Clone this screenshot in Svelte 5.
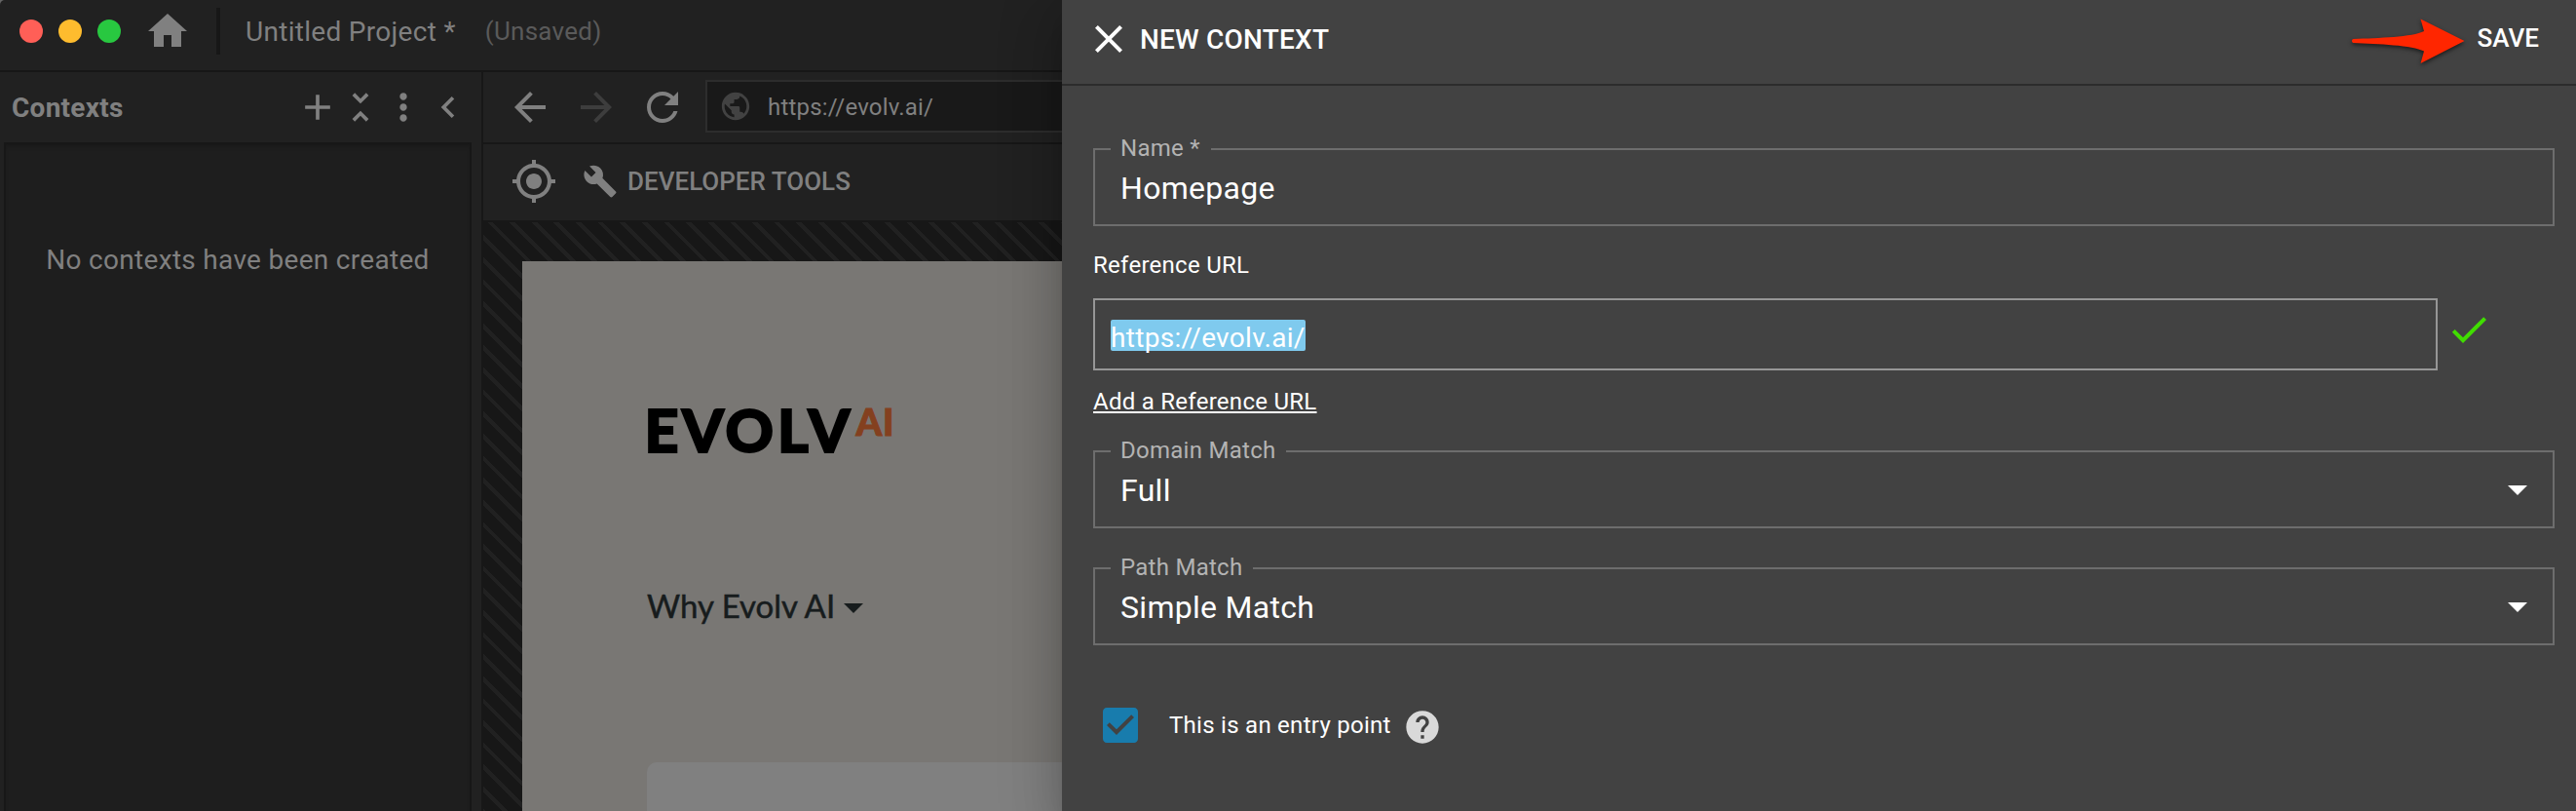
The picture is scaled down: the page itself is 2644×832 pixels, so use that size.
<script>
	const icons = {
		home: 'M10 20v-6h4v6h5v-8h3L12 3 2 12h3v8z',
		add: 'M19 13h-6v6h-2v-6H5v-2h6V5h2v6h6v2z',
		collapse: 'M7.41 18.59L8.83 20 12 16.83 15.17 20l1.41-1.41L12 14l-4.59 4.59zm9.18-13.18L15.17 4 12 7.17 8.83 4 7.41 5.41 12 10l4.59-4.59z',
		more: 'M12 8c1.1 0 2-.9 2-2s-.9-2-2-2-2 .9-2 2 .9 2 2 2zm0 2c-1.1 0-2 .9-2 2s.9 2 2 2 2-.9 2-2-.9-2-2-2zm0 6c-1.1 0-2 .9-2 2s.9 2 2 2 2-.9 2-2-.9-2-2-2z',
		left: 'M15.41 7.41L14 6l-6 6 6 6 1.41-1.41L10.83 12z',
		back: 'M20 11H7.83l5.59-5.59L12 4l-8 8 8 8 1.41-1.41L7.83 13H20v-2z',
		forward: 'M12 4l-1.41 1.41L16.17 11H4v2h12.17l-5.58 5.59L12 20l8-8z',
		refresh: 'M17.65 6.35C16.2 4.9 14.21 4 12 4c-4.42 0-7.99 3.58-7.99 8s3.57 8 7.99 8c3.73 0 6.84-2.55 7.73-6h-2.08c-.82 2.33-3.04 4-5.65 4-3.31 0-6-2.69-6-6s2.69-6 6-6c1.66 0 3.14.69 4.22 1.78L13 11h7V4l-2.35 2.35z',
		globe: 'M12 2C6.48 2 2 6.48 2 12s4.48 10 10 10 10-4.48 10-10S17.52 2 12 2zm-1 17.93c-3.95-.49-7-3.85-7-7.93 0-.62.08-1.21.21-1.79L9 15v1c0 1.1.9 2 2 2v1.93zm6.9-2.54c-.26-.81-1-1.39-1.9-1.39h-1v-3c0-.55-.45-1-1-1H8v-2h2c.55 0 1-.45 1-1V7h2c1.1 0 2-.9 2-2v-.41c2.93 1.19 5 4.06 5 7.41 0 2.08-.8 3.97-2.1 5.39z',
		target: 'M12 8c-2.21 0-4 1.79-4 4s1.79 4 4 4 4-1.79 4-4-1.79-4-4-4zm8.94 3c-.46-4.17-3.77-7.48-7.94-7.94V1h-2v2.06C6.83 3.52 3.52 6.83 3.06 11H1v2h2.06c.46 4.17 3.77 7.48 7.94 7.94V23h2v-2.06c4.17-.46 7.48-3.77 7.94-7.94H23v-2h-2.06zM12 19c-3.87 0-7-3.13-7-7s3.13-7 7-7 7 3.13 7 7-3.13 7-7 7z',
		wrench: 'M22.7 19l-9.1-9.1c.9-2.3.4-5-1.5-6.9-2-2-5-2.4-7.4-1.3L9 6 6 9 1.6 4.7C.4 7.1.9 10.1 2.9 12.1c1.9 1.9 4.6 2.4 6.9 1.5l9.1 9.1c.4.4 1 .4 1.4 0l2.3-2.3c.5-.4.5-1.1.1-1.4z',
		close: 'M19 6.41L17.59 5 12 10.59 6.41 5 5 6.41 10.59 12 5 17.59 6.41 19 12 13.41 17.59 19 19 17.59 13.41 12z',
		check: 'M9 16.17L4.83 12l-1.42 1.41L9 19 21 7l-1.41-1.41z',
		caret: 'M7 10l5 5 5-5z',
		checkbox: 'M19 3H5c-1.11 0-2 .9-2 2v14c0 1.1.89 2 2 2h14c1.11 0 2-.9 2-2V5c0-1.1-.89-2-2-2zm-9 14l-5-5 1.41-1.41L10 14.17l7.59-7.59L19 8l-9 9z',
		help: 'M12 2C6.48 2 2 6.48 2 12s4.48 10 10 10 10-4.48 10-10S17.52 2 12 2zm1 17h-2v-2h2v2zm2.07-7.75l-.9.92C13.45 12.9 13 13.5 13 15h-2v-.5c0-1.1.45-2.1 1.17-2.83l1.24-1.26c.37-.36.59-.86.59-1.41 0-1.1-.9-2-2-2s-2 .9-2 2H8c0-2.21 1.79-4 4-4s4 1.79 4 4c0 .88-.36 1.68-.93 2.25z'
	}

	const url = 'https://evolv.ai/'
	let name = $state('Homepage')
	let entryPoint = $state(true)
</script>

{#snippet icon(id, size = 48)}
	<svg class="icon {id}" width={size} height={size} viewBox="0 0 24 24" aria-hidden="true">
		<path d={icons[id]} />
	</svg>
{/snippet}

{#snippet select(label, value)}
	<fieldset>
		<legend>{label}</legend>
		<div class="value">
			<span>{value}</span>
			{@render icon('caret')}
		</div>
	</fieldset>
{/snippet}

<div class="app">
	<header class="titlebar">
		<i class="light red"></i>
		<i class="light yellow"></i>
		<i class="light green"></i>
		{@render icon('home')}
		<i class="divider"></i>
		<span class="project">Untitled Project *</span>
		<span class="unsaved">(Unsaved)</span>
	</header>

	<div class="workspace">
		<aside>
			<div class="aside-head">
				<h2>Contexts</h2>
				{@render icon('add', 44)}
				{@render icon('collapse', 44)}
				{@render icon('more', 44)}
				{@render icon('left', 44)}
			</div>
			<div class="contexts">No contexts have been created</div>
		</aside>

		<main>
			<nav>
				{@render icon('back')}
				{@render icon('forward')}
				{@render icon('refresh')}
				<div class="address">
					{@render icon('globe', 34)}
					<span>{url}</span>
				</div>
			</nav>
			<div class="tools">
				{@render icon('target')}
				{@render icon('wrench', 36)}
				<span>DEVELOPER TOOLS</span>
			</div>
			<div class="canvas">
				<div class="page">
					<svg class="logo" width="256" height="60" viewBox="0 0 256 60">
						<text class="brand" x="-2.5 36 80.5 134 165.500" y="52">EVOLV</text>
						<text class="ai" x="214.5 242" y="34.500">AI</text>
					</svg>
					<div class="menu">
						<span>Why Evolv AI</span>
						<i></i>
					</div>
					<div class="card"></div>
				</div>
			</div>
		</main>
	</div>

	<section class="drawer">
		<header>
			{@render icon('close')}
			<h1>NEW CONTEXT</h1>
			<svg class="pointer" width="120" height="54" viewBox="0 0 120 54" aria-hidden="true">
				<path d="M4.500 25C30 24 65 23 77 17L73.500 4.500L118.500 27L73.500 50L77 37.500C65 31.500 30 30 4.500 29C2.500 28.500 2.500 25.500 4.500 25Z" />
			</svg>
			<button class="save">SAVE</button>
		</header>

		<form>
			<fieldset>
				<legend>Name *</legend>
				<input class="value" bind:value={name} />
			</fieldset>

			<div class="label">Reference URL</div>
			<div class="reference">
				<div class="url"><mark>{url}</mark></div>
				{@render icon('check')}
			</div>
			<a href="#add">Add a Reference URL</a>

			{@render select('Domain Match', 'Full')}
			{@render select('Path Match', 'Simple Match')}

			<div class="entry">
				<button type="button" role="checkbox" aria-checked={entryPoint} aria-label="Entry point" onclick={() => (entryPoint = !entryPoint)}>
					{@render icon('checkbox')}
				</button>
				<span>This is an entry point</span>
				{@render icon('help', 40)}
			</div>
		</form>
	</section>
</div>

<style>
	:global(body) {
		background: #666;
	}
	.app {
		position: relative;
		display: flex;
		flex-direction: column;
		height: 832px;
		overflow: hidden;
		border-top-left-radius: 5px;
		background: #212121;
		color: #808080;
		font-family: Roboto, sans-serif;
		font-size: 28px;
	}
	.app * {
		box-sizing: border-box;
	}
	.icon {
		display: block;
		flex: none;
		fill: currentColor;
	}
	button {
		border: 0;
		padding: 0;
		background: transparent;
		color: inherit;
		font: inherit;
	}
	h1,
	h2 {
		margin: 0;
		font-size: 28px;
	}

	.titlebar {
		display: flex;
		align-items: center;
		height: 74px;
		padding: 0 0 8px 20px;
		border-bottom: 2px solid #171717;
	}
	.light {
		width: 24px;
		height: 24px;
		margin-right: 16px;
		border-radius: 50%;
	}
	.red {
		background: #ff5f57;
	}
	.yellow {
		background: #febc2e;
	}
	.green {
		background: #28c840;
	}
	.home {
		margin-left: 8px;
	}
	.divider {
		width: 4px;
		height: 48px;
		margin: 0 26px;
		background: #171717;
	}
	.project {
		letter-spacing: 0.3px;
	}
	.unsaved {
		margin-left: 30px;
		color: #5a5a5a;
		font-size: 26px;
		letter-spacing: 0.25px;
	}

	.workspace {
		display: flex;
		flex: 1;
		min-height: 0;
	}
	aside {
		display: flex;
		flex-direction: column;
		width: 496px;
		padding: 0 10px 0 4px;
		border-right: 2px solid #171717;
	}
	.aside-head {
		display: flex;
		align-items: center;
		height: 72px;
		padding-left: 8px;
	}
	.aside-head h2 {
		flex: 1;
		font-weight: 700;
		letter-spacing: 0.25px;
	}
	.left {
		margin: 0 2px;
	}
	.contexts {
		flex: 1;
		padding-top: 103px;
		border: 2px solid #171717;
		border-bottom: 0;
		background: #1e1e1e;
		box-shadow: inset 0 4px 4px -2px #191919;
		line-height: 32px;
		letter-spacing: 0.3px;
		text-align: center;
	}

	main {
		display: flex;
		flex-direction: column;
		flex: 1;
	}
	nav {
		display: flex;
		align-items: center;
		height: 74px;
		padding-left: 24px;
		border-bottom: 2px solid #171717;
	}
	.forward {
		margin: 0 20px;
		color: #3d3d3d;
	}
	.address {
		display: flex;
		flex: 1;
		align-items: center;
		height: 54px;
		margin: -2px 0 0 20px;
		padding-left: 12px;
		border: 2px solid #2d2d2d;
		background: #191919;
		font-size: 24px;
		letter-spacing: 0.2px;
	}
	.address span {
		margin-top: 2px;
	}
	.globe {
		margin-right: 16px;
		color: #424242;
	}
	.tools {
		display: flex;
		align-items: center;
		height: 80px;
		padding: 0 0 2px 28px;
		border-bottom: 2px solid #171717;
		font-size: 26px;
		font-weight: 500;
	}
	.wrench {
		margin: 0 10px 0 26px;
	}
	.tools span {
		margin-top: -1px;
	}
	.canvas {
		display: flex;
		flex: 1;
		min-height: 0;
		padding: 40px 0 0 40px;
		background: repeating-linear-gradient(45deg, #212121 0 2px, #171717 2px 14px, #212121 14px 16px);
	}
	.page {
		flex: 1;
		padding: 144px 0 0 128px;
		background: #797774;
	}
	.logo {
		display: block;
		overflow: visible;
		font-family: Lato, sans-serif;
		font-weight: 900;
	}
	.brand {
		fill: #000;
		stroke: #000;
		stroke-width: 2px;
		font-size: 61px;
	}
	.ai {
		fill: #84401f;
		stroke: #84401f;
		stroke-width: 1px;
		font-size: 38px;
	}
	.menu {
		display: flex;
		align-items: center;
		height: 40px;
		margin-top: 129px;
		color: #171c1d;
		font-family: Lato, sans-serif;
		font-size: 33px;
		-webkit-text-stroke: 0.5px;
	}
	.menu i {
		margin: 6px 0 0 9px;
		border: 10px solid transparent;
		border-top-color: #171c1d;
		border-bottom: 0;
	}
	.card {
		height: 60px;
		margin-top: 141px;
		border-top-left-radius: 10px;
		background: #808080;
	}

	.drawer {
		position: absolute;
		top: 0;
		right: 0;
		bottom: 0;
		width: 1554px;
		background: #424242;
		box-shadow:
			0 16px 20px -10px rgba(0, 0, 0, 0.2),
			0 32px 48px 4px rgba(0, 0, 0, 0.14),
			0 12px 60px 10px rgba(0, 0, 0, 0.12);
		color: #fff;
	}
	.drawer header {
		display: flex;
		align-items: center;
		height: 88px;
		padding: 0 38px 6px 24px;
		border-bottom: 2px solid #2c2c2c;
	}
	h1 {
		flex: 1;
		margin-left: 8px;
		font-weight: 500;
		letter-spacing: 0.2px;
	}
	.pointer {
		margin: 4px 12px 0 0;
		fill: #ff2600;
		filter: drop-shadow(0 2px 2px rgba(0, 0, 0, 0.6));
	}
	.save {
		margin-top: -2px;
		font-size: 26px;
		font-weight: 500;
	}
	form {
		padding: 53px 22px 0 32px;
		font-size: 24px;
		letter-spacing: 0.27px;
	}
	fieldset {
		min-width: 0;
		height: 91px;
		margin: 0;
		padding: 0 12px 0 16px;
		border: 2px solid #6d6d6d;
	}
	legend {
		padding: 0 11px 2px 10px;
		color: #b3b3b3;
		line-height: 22px;
	}
	.value {
		display: flex;
		align-items: center;
		justify-content: space-between;
		width: 100%;
		height: 56px;
		padding: 0 0 0 10px;
		border: 0;
		outline: 0;
		background: transparent;
		color: #fff;
		font-family: inherit;
		font-size: 32px;
		letter-spacing: 0.3px;
	}
	.caret {
		margin-top: -2px;
	}
	.label {
		margin-top: 26px;
		line-height: 28px;
	}
	.reference {
		display: flex;
		align-items: center;
		margin-top: 20px;
	}
	.url {
		display: flex;
		width: 1380px;
		height: 74px;
		padding: 20px 16px;
		border: 2px solid #969696;
		font-size: 28px;
		letter-spacing: 0.3px;
	}
	mark {
		height: 32px;
		border-radius: 2px;
		background: #7fcaee;
		color: #fff;
		line-height: 37px;
	}
	.check {
		margin: -10px 0 0 8px;
		color: #40dd00;
	}
	a {
		display: block;
		margin: 18px 0 25px;
		color: #fff;
		line-height: 28px;
		text-decoration-thickness: 2px;
		text-underline-offset: 2px;
	}
	a + fieldset {
		margin-bottom: 29px;
	}
	.entry {
		display: flex;
		align-items: center;
		height: 48px;
		margin: 58px 0 0 4px;
	}
	.checkbox {
		color: #187cad;
	}
	.entry span {
		margin: 0 12px 0 26px;
	}
	.help {
		margin-top: 4px;
		color: #d9d9d9;
	}
</style>
